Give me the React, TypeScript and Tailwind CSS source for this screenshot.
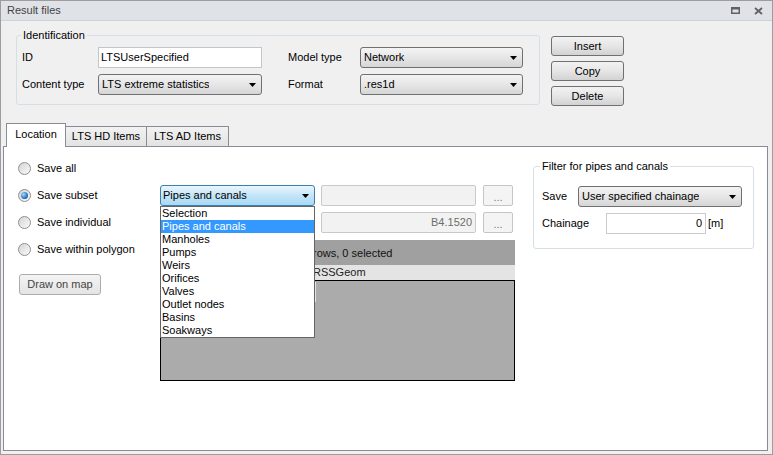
import React from "react";

const listItems = [
  "Selection",
  "Pipes and canals",
  "Manholes",
  "Pumps",
  "Weirs",
  "Orifices",
  "Valves",
  "Outlet nodes",
  "Basins",
  "Soakways",
];

function Arrow() {
  return (
    <svg width="7" height="4" viewBox="0 0 7 4" className="shrink-0">
      <polygon points="0,0 7,0 3.5,4" fill="#000" />
    </svg>
  );
}

function Combo({ value, width, focused }: { value: string; width: string; focused?: boolean }) {
  return (
    <div
      className={
        focused
          ? `flex h-[21px] items-center justify-between rounded-[3px] border border-[#3c7fb1] bg-linear-to-b from-[#eaf6fd] via-[#c4e5f8] to-[#a7d9f5] pl-[2px] pr-[5px] ${width}`
          : `flex h-[21px] items-center justify-between rounded-[3px] border border-[#707070] bg-linear-to-b from-[#f4f4f4] via-[#e6e6e6] to-[#d6d6d6] pl-[3px] pr-[5px] ${width}`
      }
    >
      <span className="truncate">{value}</span>
      <Arrow />
    </div>
  );
}

function PushButton({ label }: { label: string }) {
  return (
    <div className="flex h-[20px] w-[73px] items-center justify-center rounded-[3px] border border-[#707070] bg-linear-to-b from-[#f2f2f2] via-[#e6e6e6] to-[#d2d2d2]">
      {label}
    </div>
  );
}

function Radio({ label, checked }: { label: string; checked?: boolean }) {
  return (
    <div className="flex h-[27px] items-center">
      <span className="flex h-[13px] w-[13px] items-center justify-center rounded-full border border-[#8e8f8f] bg-linear-to-br from-[#d4d4d4] to-[#fafafa]">
        {checked && (
          <span className="h-[7px] w-[7px] rounded-full bg-[radial-gradient(circle_at_35%_35%,#9fdcff,#1b62b8_70%,#0d3f86)]" />
        )}
      </span>
      <span className="ml-[6px]">{label}</span>
    </div>
  );
}

function DotsButton() {
  return (
    <div className="ml-[7px] flex h-[21px] w-[30px] items-end justify-center rounded-[2px] border border-[#c5c5c5] bg-[#f4f4f4] pb-[4px] text-[#7a7a7a] leading-[8px]">
      ...
    </div>
  );
}

export default function App() {
  return (
    <div className="flex h-[455px] w-[773px] flex-col overflow-hidden border border-[#9c9c9c] bg-[#f0f0f0] font-['Liberation_Sans',Arial,sans-serif] text-[11px] leading-[13px] text-black">
      {/* title bar */}
      <div className="flex h-[20px] shrink-0 items-center justify-between border-b border-[#cdd1d8] bg-[#dfe2e7] pl-[6px] pr-[9px]">
        <span className="text-[#444]">Result files</span>
        <div className="flex items-center gap-[14px]">
          <svg width="9" height="7" viewBox="0 0 9 7">
            <rect x="0.75" y="0.75" width="7.5" height="5.5" fill="none" stroke="#5f6166" strokeWidth="1.5" />
            <rect x="0" y="0" width="9" height="2.5" fill="#5f6166" />
          </svg>
          <svg width="9" height="8" viewBox="0 0 9 8">
            <path d="M1 1 L8 7 M8 1 L1 7" stroke="#5f6166" strokeWidth="1.8" />
          </svg>
        </div>
      </div>

      {/* identification + buttons */}
      <div className="flex h-[102px] shrink-0 items-start pl-[15px] pt-[8px]">
        <fieldset className="h-[76px] w-[524px] rounded-[3px] border border-[#d5dfe5]">
          <legend className="ml-[4px] px-[2px] leading-[13px]">Identification</legend>
          <div className="ml-[5px] mt-[5px] grid grid-cols-[76px_164px_26px_72px_163px] items-center gap-y-[6px]">
            <span>ID</span>
            <div className="flex h-[21px] items-center border border-[#c2c5cc] bg-white pl-[2px]">LTSUserSpecified</div>
            <span />
            <span>Model type</span>
            <Combo value="Network" width="w-[163px]" />
            <span>Content type</span>
            <Combo value="LTS extreme statistics" width="w-[164px]" />
            <span />
            <span>Format</span>
            <Combo value=".res1d" width="w-[163px]" />
          </div>
        </fieldset>
        <div className="ml-[11px] mt-[7px] flex flex-col gap-[5px]">
          <PushButton label="Insert" />
          <PushButton label="Copy" />
          <PushButton label="Delete" />
        </div>
      </div>

      {/* tabs */}
      <div className="flex h-[23px] shrink-0 items-end pl-[5px]">
        <div className="relative z-10 -mb-[1px] flex h-[24px] w-[60px] items-center justify-center border border-b-0 border-[#898c95] bg-white pb-[2px]">
          Location
        </div>
        <div className="-ml-[1px] flex h-[20px] w-[82px] items-center justify-center border border-b-0 border-[#898c95] bg-linear-to-b from-[#f2f2f2] to-[#e3e3e3]">
          LTS HD Items
        </div>
        <div className="-ml-[1px] flex h-[20px] w-[83px] items-center justify-center border border-b-0 border-[#898c95] bg-linear-to-b from-[#f2f2f2] to-[#e3e3e3]">
          LTS AD Items
        </div>
      </div>

      {/* tab panel */}
      <div className="mb-[3px] ml-[2px] mr-[4px] flex flex-1 border border-[#898c95] bg-white">
        <div className="w-[156px] shrink-0 pl-[14px] pt-[8px]">
          <Radio label="Save all" />
          <Radio label="Save subset" checked />
          <Radio label="Save individual" />
          <Radio label="Save within polygon" />
          <div className="ml-[1px] mt-[11px] flex h-[21px] w-[82px] items-center justify-center rounded-[3px] border border-[#adadad] bg-linear-to-b from-[#f4f4f4] to-[#e4e4e4] text-[#444]">
            Draw on map
          </div>
        </div>

        <div className="w-[355px] shrink-0 pt-[38px]">
          <div className="flex items-center">
            <div className="relative">
              <Combo value="Pipes and canals" width="w-[155px]" focused />
              <div className="absolute left-0 top-[21px] z-20 w-[155px] border border-[#646464] bg-white">
                {listItems.map((item) => (
                  <div
                    key={item}
                    className={
                      item === "Pipes and canals"
                        ? "h-[13px] bg-[#3399ff] pl-[1px] leading-[13px] text-white"
                        : "h-[13px] pl-[1px] leading-[13px]"
                    }
                  >
                    {item}
                  </div>
                ))}
              </div>
            </div>
            <div className="ml-[6px] h-[21px] w-[155px] rounded-[2px] border border-[#c9c9c9] bg-[#f2f2f2]" />
            <DotsButton />
          </div>
          <div className="mt-[6px] flex items-center pl-[161px]">
            <div className="flex h-[21px] w-[155px] items-center justify-end rounded-[2px] border border-[#c9c9c9] bg-[#f2f2f2] pr-[3px] text-[#6d6d6d]">
              B4.1520
            </div>
            <DotsButton />
          </div>
          <div className="mt-[7px] w-[355px]">
            <div className="flex h-[25px] items-center bg-[#a0a0a0] pl-[153px] pt-[1px] text-[#111]">rows, 0 selected</div>
            <div className="flex h-[15px] items-center bg-[#e4e4e4] pl-[153px] text-[#222]">RSSGeom</div>
            <div className="flex h-[101px] items-start border border-black bg-[#ababab]">
              <div className="ml-[154px] mt-[1px] h-[20px] w-[1px] bg-[#e4e4e4]" />
            </div>
          </div>
        </div>

        <div className="ml-[18px] w-[221px] shrink-0 pt-[13px]">
          <fieldset className="h-[89px] w-[221px] rounded-[3px] border border-[#d5dfe5]">
            <legend className="ml-[6px] px-[2px] leading-[13px]">Filter for pipes and canals</legend>
            <div className="ml-[8px] mt-[13px] flex items-center">
              <span className="w-[36px]">Save</span>
              <Combo value="User specified chainage" width="w-[164px]" />
            </div>
            <div className="ml-[8px] mt-[6px] flex items-center">
              <span className="w-[64px]">Chainage</span>
              <div className="flex h-[21px] w-[100px] items-center justify-end border border-[#c9ccd2] bg-white pr-[3px]">0</div>
              <span className="ml-[2px]">[m]</span>
            </div>
          </fieldset>
        </div>
      </div>
    </div>
  );
}
